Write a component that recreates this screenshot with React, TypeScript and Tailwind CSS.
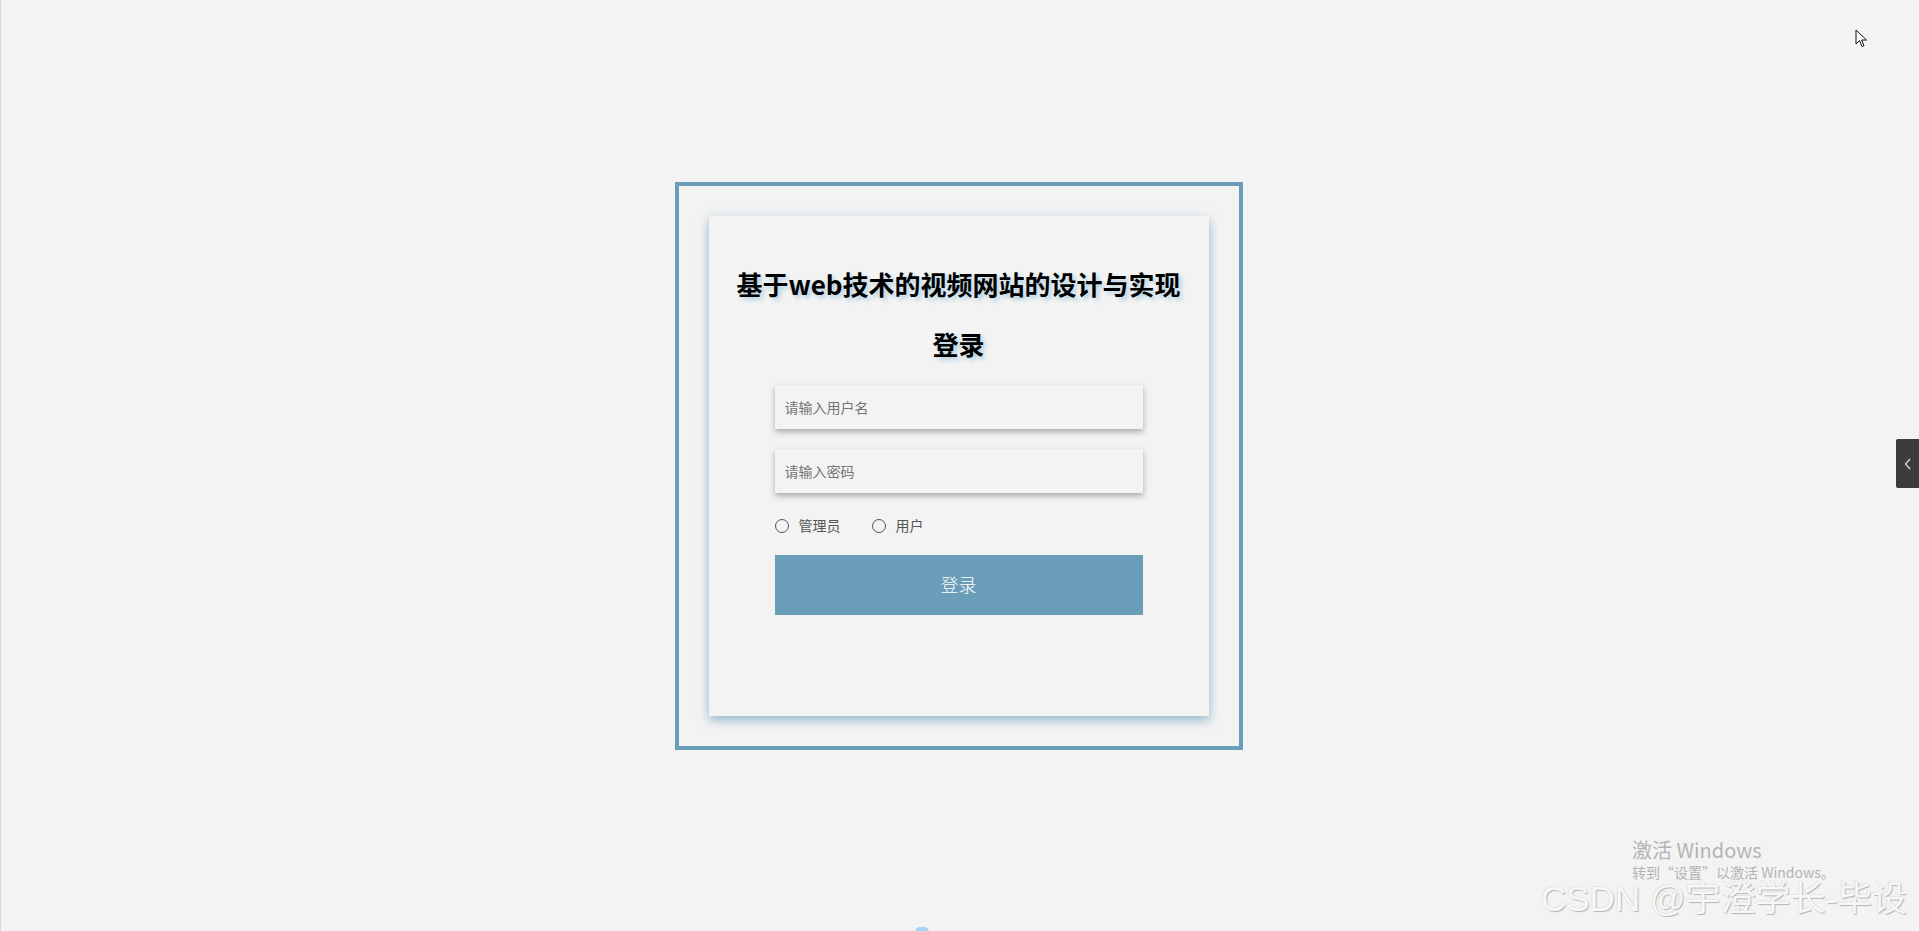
import { useState } from 'react';

export default function App() {
  const [role, setRole] = useState('');

  return (
    <div className="relative h-[931px] w-full overflow-hidden bg-[#f3f3f3] border-l border-[#d6d6d6] font-['Noto_Sans_CJK_SC','Noto_Sans',sans-serif]">
      <div className="flex h-full items-center justify-center pr-[3px]">
        {/* outer frame */}
        <div className="border-4 border-[#6a9db8] p-[30px]">
          <div className="w-[500px] h-[500px] bg-[#f3f3f3] shadow-[0_4px_10px_rgba(106,157,184,0.7)] px-[66px] pt-[50px] flex flex-col">
            <h2 className="text-center text-[26px] leading-[36px] font-bold text-black whitespace-nowrap -mx-[60px] [text-shadow:3px_3px_4px_#b3d0e2]">
              基于web技术的视频网站的设计与实现
            </h2>
            <h2 className="mt-[24px] text-center text-[26px] leading-[36px] font-bold text-black [text-shadow:3px_3px_4px_#b3d0e2]">
              登录
            </h2>

            <input
              type="text"
              placeholder="请输入用户名"
              className="mt-[23px] h-[44px] w-full bg-[#f3f3f3] px-[10px] text-[14px] text-[#333] outline-none placeholder:text-[#757575] shadow-[0_3px_6px_rgba(0,0,0,0.3)]"
            />
            <input
              type="password"
              placeholder="请输入密码"
              className="mt-[20px] h-[44px] w-full bg-[#f3f3f3] px-[10px] text-[14px] text-[#333] outline-none placeholder:text-[#757575] shadow-[0_3px_6px_rgba(0,0,0,0.3)]"
            />

            <div className="mt-[23px] flex h-[20px] items-center text-[14px] text-[#555]">
              <label className="flex items-center cursor-pointer" onClick={() => setRole('admin')}>
                <span className="flex h-[14px] w-[14px] items-center justify-center rounded-full border border-[#555]">
                  {role === 'admin' && <span className="h-[8px] w-[8px] rounded-full bg-[#6a9db8]" />}
                </span>
                <span className="ml-[10px]">管理员</span>
              </label>
              <label className="ml-[31px] flex items-center cursor-pointer" onClick={() => setRole('user')}>
                <span className="flex h-[14px] w-[14px] items-center justify-center rounded-full border border-[#555]">
                  {role === 'user' && <span className="h-[8px] w-[8px] rounded-full bg-[#6a9db8]" />}
                </span>
                <span className="ml-[10px]">用户</span>
              </label>
            </div>

            <button className="mt-[19px] h-[60px] w-full bg-[#6a9db8] text-[18px] font-light text-white">
              登录
            </button>
          </div>
        </div>
      </div>

      {/* mouse cursor */}
      <svg className="absolute left-[1854px] top-[29px]" width="13" height="20" viewBox="0 0 13 20">
        <path d="M1 1 L1 15 L4.5 11.5 L7 17.5 L9 16.7 L6.6 11 L11.5 11 Z" fill="#fff" stroke="#111" strokeWidth="1" strokeLinejoin="miter" />
      </svg>

      {/* side tab */}
      <div className="absolute right-0 top-[439px] flex h-[49px] w-[23px] items-center justify-center rounded-l-[2px] bg-[#3c3c3c]">
        <svg width="8" height="12" viewBox="0 0 8 12">
          <path d="M6 1 L1.5 6 L6 11" fill="none" stroke="#d8d8d8" strokeWidth="1.3" />
        </svg>
      </div>

      {/* windows activation */}
      <div className="absolute left-[1631px] top-[836px] text-[#b3b3b3] font-['Noto_Sans_CJK_SC','Noto_Sans',sans-serif]">
        <div className="text-[20px] leading-[28px]">激活 Windows</div>
        <div className="text-[14px] leading-[20px] -mt-[2px]">转到“设置”以激活 Windows。</div>
      </div>

      {/* csdn watermark */}
      <div className="absolute left-[1540px] top-[876px] whitespace-nowrap text-[35px] leading-[46px] text-[#f7f7f7] font-['Liberation_Sans','Noto_Sans_CJK_SC',sans-serif] [text-shadow:1px_1px_1px_#b4b4b4,-1px_-1px_0_#e6e6e6]">
        CSDN @宇澄学长-毕设
      </div>

      {/* bottom blob */}
      <div className="absolute left-[914px] top-[927px] h-[10px] w-[14px] rounded-full bg-[#a7d3f5]" />
    </div>
  );
}
